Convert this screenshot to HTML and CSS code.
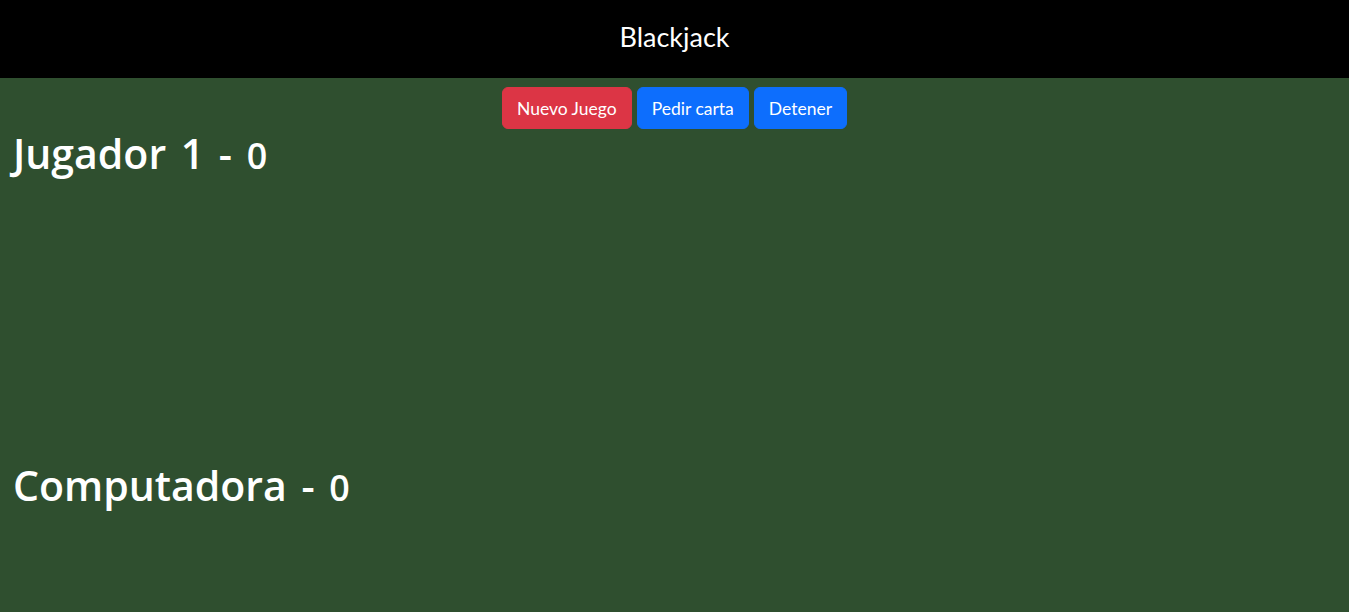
FILE: index.html
```html
<!DOCTYPE html>
<html lang="es">
<head>
<meta charset="utf-8">
<title>Blackjack</title>
<link rel="stylesheet" href="styles.css">
</head>
<body>
<header class="topbar"><h1 class="title">Blackjack</h1></header>
<div class="controls">
  <button class="btn btn-red">Nuevo Juego</button>
  <button class="btn btn-blue">Pedir carta</button>
  <button class="btn btn-blue">Detener</button>
</div>
<section class="player">
  <h2 class="name">Jugador 1 - <small class="score">0</small></h2>
  <div class="cards"></div>
</section>
<section class="player">
  <h2 class="name">Computadora - <small class="score">0</small></h2>
  <div class="cards cards-last"></div>
</section>
</body>
</html>
```
FILE: styles.css
```css
html, body {
  margin: 0;
  padding: 0;
}
html {
  background: #2f4f2f;
}
body {
  color: #fff;
  font-family: "Lato", "Open Sans", sans-serif;
}
.topbar {
  background: #000;
  height: 78px;
  display: flex;
  align-items: center;
  justify-content: center;
}
.title {
  margin: 0 0 4px;
  font-size: 27px;
  font-weight: 400;
  line-height: 1.2;
}
.controls {
  display: flex;
  justify-content: center;
  gap: 5px;
  margin-top: 9px;
}
.btn {
  font-family: inherit;
  font-size: 17.5px;
  color: #fff;
  border: 1px solid transparent;
  border-radius: 6px;
  height: 42px;
  padding: 0 14px;
  cursor: pointer;
}
.btn-red { background: #dc3545; border-color: #dc3545; }
.btn-blue { background: #0d6efd; border-color: #0d6efd; }
.player {
  padding-left: 13px;
}
.name {
  margin: 0;
  font-family: "Open Sans", "Lato", sans-serif;
  font-size: 41px;
  font-weight: 600;
  line-height: 1.2;
  word-spacing: 4px;
}
.score {
  font-size: 0.875em;
}
.cards {
  height: 283px;
}
.cards-last {
  height: 40px;
}
```
